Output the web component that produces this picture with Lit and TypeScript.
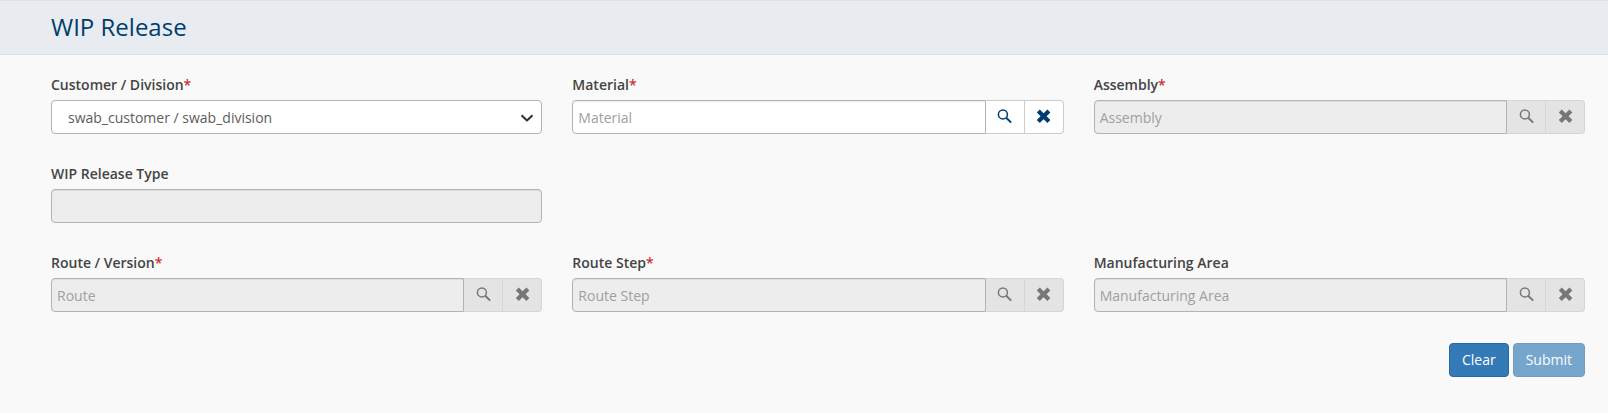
import { LitElement, html, css, nothing } from "lit";
import { customElement, property } from "lit/decorators.js";

@customElement("form-field")
class FormField extends LitElement {
  @property() label = "";
  @property() placeholder = "";
  @property() kind = "lookup";
  @property({ type: Boolean }) required = false;
  @property({ type: Boolean }) disabled = false;

  static styles = css`
    :host { display: block; min-width: 0; }
    .label { display: block; height: 20px; line-height: 20px; margin-bottom: 5px; font-weight: 600; color: #444; white-space: nowrap; }
    .star { color: #d0312d; }
    .box { display: flex; box-sizing: border-box; height: 34px; }
    .input { flex: 1; min-width: 0; box-sizing: border-box; border: 1px solid #b3b3b3; border-radius: 4px; background: #fff; box-shadow: inset 0 1px 1px rgba(0,0,0,.075); padding: 1px 5px 0; line-height: 32px; color: #a0a0a0; white-space: nowrap; }
    .lookup { border-radius: 4px 0 0 4px; }
    .select { display: flex; align-items: center; justify-content: space-between; padding: 1px 7px 0 16px; color: #5c5c5c; box-shadow: none; }
    .off { background: #ededed; }
    .btn { box-sizing: border-box; width: 39px; border: 1px solid #ccc; border-left: 0; background: #fff; color: #003d75; display: flex; justify-content: center; padding-top: 8px; }
    .btn:last-child { border-radius: 0 4px 4px 0; }
    .dim { background: #e4e4e4; border-color: #d6d6d6; color: #777; }
    svg { display: block; }
  `;

  render() {
    const off = this.disabled ? "off" : "";
    const dim = this.disabled ? "dim" : "";
    return html`
      <span class="label">${this.label}${this.required ? html`<span class="star">*</span>` : nothing}</span>
      <div class="box">
        ${this.kind === "select"
          ? html`<div class="input select"><span>${this.placeholder}</span>
              <svg width="14" height="14" viewBox="0 0 14 14" fill="none" stroke="#292f36" stroke-width="2"><path d="M1.5 4.2 7 9.4l5.5-5.2" stroke-linejoin="round"/></svg></div>`
          : this.kind === "text"
          ? html`<div class="input ${off}"></div>`
          : html`<div class="input lookup ${off}">${this.placeholder}</div>
              <div class="btn ${dim}"><svg width="15" height="15" viewBox="0 0 15 15" fill="none" stroke="currentColor"><circle cx="5.9" cy="5.4" r="4.5" stroke-width="1.5"/><path d="m9.2 8.7 5 4.9" stroke-width="2"/></svg></div>
              <div class="btn ${dim}"><svg width="15" height="15" viewBox="0 0 15 15" fill="none" stroke="currentColor" stroke-width="4.2"><path d="m2.3 1.9 10.6 10.6M12.9 1.9 2.3 12.5"/></svg></div>`}
      </div>`;
  }
}

@customElement("app-root")
class AppRoot extends LitElement {
  static styles = css`
    :host { display: block; box-sizing: border-box; height: 413px; background: #f9f9f9; font: 14px "Open Sans", sans-serif; overflow: hidden; }
    .head { box-sizing: border-box; height: 55px; padding: 0 51px; background: #e8ecf1; border-top: 1px solid #dce1e6; border-bottom: 1px solid #d9dfe4; color: #003d6e; font-size: 24px; font-weight: 400; line-height: 51px; }
    .grid { display: grid; grid-template-columns: repeat(3, minmax(0, 1fr)); gap: 30px; padding: 20px 23px 0 51px; }
    .first { grid-column: 1; }
    .next { grid-column-start: 1; }
    .actions { display: flex; justify-content: flex-end; gap: 4px; padding: 31px 23px 0 0; }
    .action { box-sizing: border-box; height: 34px; border: 1px solid #2868a0; border-radius: 4px; padding: 0 12px; background: #337ab7; color: #fff; font: inherit; line-height: 32px; }
    .faded { opacity: .65; }
  `;

  render() {
    return html`
      <div class="head">WIP Release</div>
      <div class="grid">
        <form-field kind="select" label="Customer / Division" placeholder="swab_customer / swab_division" required></form-field>
        <form-field label="Material" placeholder="Material" required></form-field>
        <form-field label="Assembly" placeholder="Assembly" required disabled></form-field>
        <form-field class="first" kind="text" label="WIP Release Type" disabled></form-field>
        <form-field class="next" label="Route / Version" placeholder="Route" required disabled></form-field>
        <form-field label="Route Step" placeholder="Route Step" required disabled></form-field>
        <form-field label="Manufacturing Area" placeholder="Manufacturing Area" disabled></form-field>
      </div>
      <div class="actions">
        <button class="action">Clear</button>
        <button class="action faded">Submit</button>
      </div>`;
  }
}
